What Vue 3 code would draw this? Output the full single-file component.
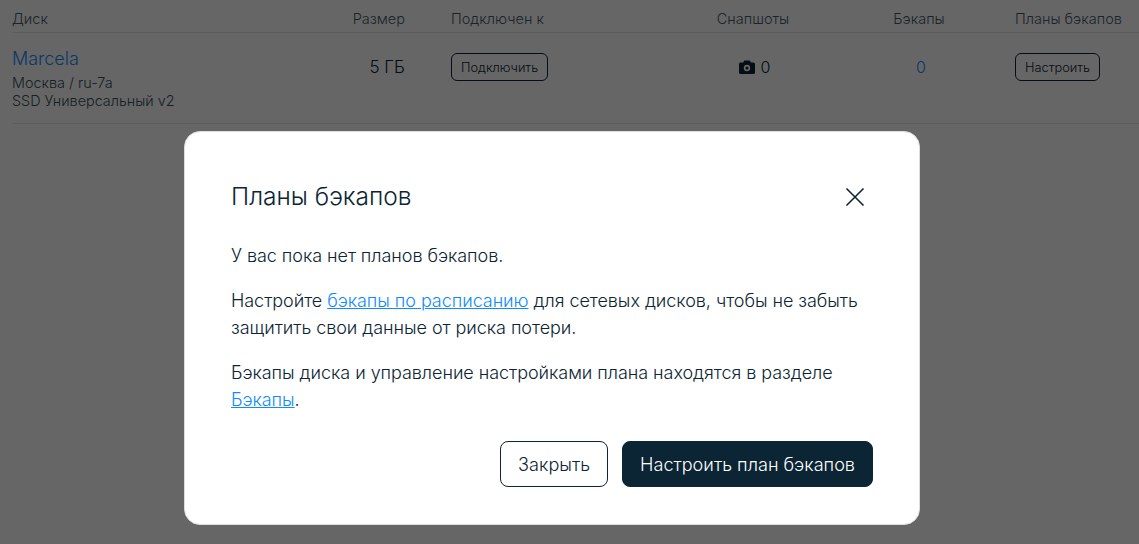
<template>
  <div class="page">
    <div class="row head">
      <div>Диск</div>
      <div class="right">Размер</div>
      <div class="c3">Подключен к</div>
      <div class="center">Снапшоты</div>
      <div class="center">Бэкапы</div>
      <div class="c6">Планы бэкапов</div>
    </div>
    <div class="row body">
      <div class="disk">
        <a class="name">Marcela</a>
        <div class="sub">Москва / ru-7a</div>
        <div class="sub">SSD Универсальный v2</div>
      </div>
      <div class="right val size">5 ГБ</div>
      <div class="c3"><button class="small">Подключить</button></div>
      <div class="center val snap">
        <svg width="16" height="14" viewBox="0 0 16 14"><path fill-rule="evenodd" d="M5.200 0.500h5.600l1 2H14.500a1.500 1.500 0 0 1 1.500 1.500v8.500a1.500 1.500 0 0 1-1.500 1.500h-13A1.500 1.500 0 0 1 0 12.500V4a1.500 1.500 0 0 1 1.500-1.500h2.700zM8 4.800a3.200 3.200 0 1 0 0 6.400a3.200 3.200 0 0 0 0-6.400zM8 6.500a1.500 1.500 0 1 1 0 3a1.500 1.500 0 0 1 0-3z" fill="#0b2534"/></svg>
        <span>0</span>
      </div>
      <div class="center val blue">0</div>
      <div class="c6"><button class="small">Настроить</button></div>
    </div>
    <div class="overlay">
      <div class="modal">
        <div class="title-row">
          <h2>Планы бэкапов</h2>
          <svg class="close" width="20" height="20" viewBox="0 0 20 20"><path d="M1.500 1.500L18.500 18.500M18.500 1.500L1.500 18.500" stroke="#0b2534" stroke-width="1.600" fill="none"/></svg>
        </div>
        <p>У вас пока нет планов бэкапов.</p>
        <p>Настройте <a>бэкапы по расписанию</a> для сетевых дисков, чтобы не забыть защитить свои данные от риска потери.</p>
        <p>Бэкапы диска и управление настройками плана находятся в разделе <a>Бэкапы</a>.</p>
        <div class="actions">
          <button class="btn">Закрыть</button>
          <button class="btn primary">Настроить план бэкапов</button>
        </div>
      </div>
    </div>
  </div>
</template>

<script setup>
</script>

<style>
html, body { margin: 0; background: #fff; }
</style>

<style scoped>
.page {
  position: relative;
  height: 544px;
  overflow: hidden;
  font-family: Inter, "Noto Sans", sans-serif;
  color: #0b2534;
  padding: 0 0 0 12px;
  box-sizing: border-box;
}
.row {
  display: grid;
  grid-template-columns: 330px 63px 255px 186px 146px 1fr;
}
.c3 { padding-left: 46px; }
.c6 { padding-left: 23px; }
.head {
  height: 33px;
  align-items: center;
  font-size: 14.5px;
  font-weight: 300;
  color: #4a5b66;
  border-bottom: 1px solid #e3e6e8;
  padding-top: 4px;
  box-sizing: border-box;
}
.body {
  height: 91px;
  border-bottom: 1px solid #e3e6e8;
  padding-top: 14px;
  box-sizing: border-box;
}
.right { text-align: right; }
.center { text-align: center; }
.name { font-size: 18px; font-weight: 300; color: #1a8cff; line-height: 24px; display: block; text-decoration: none; }
.sub { font-size: 14.4px; font-weight: 300; line-height: 18px; color: #3c4f5b; }
.sub:first-of-type { margin-top: 3px; }
.val { font-size: 16px; font-weight: 300; line-height: 40px; }
.size { font-size: 17px; }
.blue { color: #1a8cff; padding-left: 4px; }
.snap { display: flex; align-items: center; justify-content: center; gap: 6px; height: 40px; padding-left: 3px; }
.small {
  height: 28px;
  margin-top: 6px;
  padding: 0 9px;
  border: 1px solid #0b2534;
  border-radius: 6px;
  background: #fff;
  color: #0b2534;
  font: 300 12.8px Inter, sans-serif;
}
.overlay {
  position: absolute;
  inset: 0;
  background: rgba(0, 0, 0, .6);
}
.modal {
  position: absolute;
  left: 184px;
  top: 131px;
  width: 736px;
  height: 394px;
  box-sizing: border-box;
  background: #fff;
  border: 1px solid #ddd;
  border-radius: 16px;
  padding: 46px 46px 36px;
  font-size: 18px;
  font-weight: 300;
  line-height: 27px;
  letter-spacing: -0.05px;
}
.title-row {
  display: flex;
  justify-content: space-between;
  align-items: center;
  padding-right: 8px;
  height: 36px;
  margin-bottom: 28px;
}
h2 { margin: 0; font-size: 24.5px; font-weight: 300; line-height: 36px; letter-spacing: 0; }
.close { position: relative; top: 1px; }
p { margin: 0 0 18px; }
a { color: #0f8bff; text-decoration: underline; }
.actions { display: flex; justify-content: flex-end; gap: 14px; margin-top: 28px; }
.btn {
  height: 46px;
  padding: 0 17px;
  border: 1px solid #0b2534;
  border-radius: 8px;
  background: #fff;
  color: #0b2534;
  font: 300 18.1px Inter, sans-serif;
}
.primary { background: #0b2534; color: #fff; }
</style>
